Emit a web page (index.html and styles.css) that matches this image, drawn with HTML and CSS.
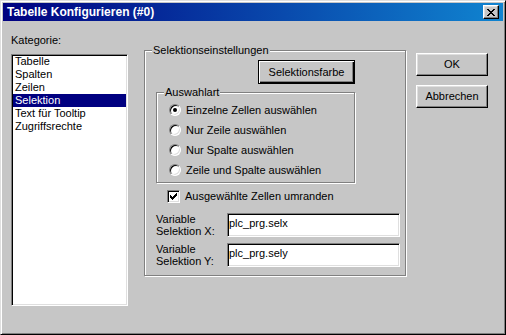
FILE: index.html
```html
<!DOCTYPE html>
<html lang="de">
    <head>
        <meta charset="UTF-8" />
        <title>Tabelle Konfigurieren (#0)</title>
        <link rel="stylesheet" href="styles.css">
    </head>
    <body>
        <div class="window">
            <div class="titlebar">
                <span class="title">Tabelle Konfigurieren (#0)</span>
                <button class="close-btn" type="button">
                    <svg width="8" height="7" viewBox="0 0 8 7" shape-rendering="crispEdges">
                        <path d="M0 0h2v1h-2z M6 0h2v1h-2z M1 1h2v1h-2z M5 1h2v1h-2z M2 2h4v1h-4z M3 3h2v1h-2z M2 4h4v1h-4z M1 5h2v1h-2z M5 5h2v1h-2z M0 6h2v1h-2z M6 6h2v1h-2z" fill="#000" />
                    </svg>
                </button>
            </div>
            <div class="content">
                <div class="category">
                    <div class="label">Kategorie:</div>
                    <ul class="listbox">
                        <li>Tabelle</li>
                        <li>Spalten</li>
                        <li>Zeilen</li>
                        <li class="selected">Selektion</li>
                        <li>Text für Tooltip</li>
                        <li>Zugriffsrechte</li>
                    </ul>
                </div>
                <div class="group main-group">
                    <span class="group-title">Selektionseinstellungen</span>
                    <div class="color-row">
                        <button class="btn btn-default" type="button">Selektionsfarbe</button>
                    </div>
                    <div class="group mode-group">
                        <span class="group-title">Auswahlart</span>
                        <div class="radio-row"><span class="radio checked"></span>Einzelne Zellen auswählen</div>
                        <div class="radio-row"><span class="radio"></span>Nur Zeile auswählen</div>
                        <div class="radio-row"><span class="radio"></span>Nur Spalte auswählen</div>
                        <div class="radio-row"><span class="radio"></span>Zeile und Spalte auswählen</div>
                    </div>
                    <div class="check-row">
                        <span class="checkbox">
                            <svg width="7" height="7" viewBox="0 0 7 7" shape-rendering="crispEdges">
                                <path d="M6 0h1v1h-1z M5 1h2v1h-2z M0 2h1v1h-1z M4 2h3v1h-3z M0 3h2v1h-2z M3 3h3v1h-3z M0 4h5v1h-5z M1 5h3v1h-3z M2 6h1v1h-1z" fill="#000" />
                            </svg>
                        </span>
                        Ausgewählte Zellen umranden
                    </div>
                    <div class="var-row">
                        <span class="var-label">Variable<br>Selektion X:</span>
                        <div class="textbox">plc_prg.selx</div>
                    </div>
                    <div class="var-row">
                        <span class="var-label">Variable<br>Selektion Y:</span>
                        <div class="textbox">plc_prg.sely</div>
                    </div>
                </div>
                <div class="actions">
                    <button class="btn" type="button">OK</button>
                    <button class="btn" type="button">Abbrechen</button>
                </div>
            </div>
        </div>
    </body>
</html>
```

FILE: styles.css
```css
* {
    box-sizing: border-box;
}
body {
    margin: 0;
    background-color: #c6c6c6;
    font-family: "Liberation Sans", Arial, sans-serif;
    font-size: 11px;
    line-height: 13px;
    color: #000;
}
.window {
    width: 506px;
    height: 335px;
    padding: 2px;
    background-color: #c6c6c6;
    border: 1px solid;
    border-color: #dfdfdf #000 #000 #dfdfdf;
    box-shadow: inset 1px 1px #fff, inset -1px -1px #808080;
}
.titlebar {
    height: 18px;
    display: flex;
    align-items: center;
    justify-content: space-between;
    padding: 0 4px 0 4px;
    background: linear-gradient(to right, #000080, #1084d0);
    color: #fff;
    font-size: 12px;
    font-weight: bold;
}
.close-btn {
    width: 16px;
    height: 14px;
    padding: 0;
    display: flex;
    align-items: center;
    justify-content: center;
    background-color: #c6c6c6;
    border: 1px solid;
    border-color: #fff #000 #000 #fff;
    box-shadow: inset -1px -1px #808080, inset 1px 1px #dfdfdf;
}
.content {
    display: flex;
    align-items: flex-start;
    padding: 13px 0 0 8px;
}
.category {
    width: 117px;
    margin-right: 16px;
}
.listbox {
    margin: 7px 0 0;
    padding: 0 1px;
    list-style: none;
    height: 252px;
    background-color: #fff;
    border: 1px solid;
    border-color: #808080 #fff #fff #808080;
    box-shadow: inset 1px 1px #000, inset -1px -1px #dfdfdf;
}
.listbox li {
    height: 13px;
    padding-left: 2px;
    white-space: nowrap;
}
.listbox li.selected {
    background-color: #000080;
    color: #fff;
}
.group {
    position: relative;
    border: 1px solid #808080;
    box-shadow: inset 1px 1px #fff, 1px 1px #fff;
}
.group-title {
    position: absolute;
    top: -7px;
    left: 7px;
    padding: 0 1px;
    background-color: #c6c6c6;
    white-space: nowrap;
}
.main-group {
    width: 262px;
    height: 226px;
    margin-top: 16px;
    padding: 9px 0 0 11px;
}
.color-row {
    width: 199px;
    display: flex;
    justify-content: flex-end;
}
.mode-group {
    width: 199px;
    height: 91px;
    margin-top: 8px;
    padding-top: 7px;
}
.radio-row {
    height: 20px;
    display: flex;
    align-items: center;
    padding-left: 12px;
}
.radio {
    position: relative;
    flex-shrink: 0;
    width: 12px;
    height: 12px;
    margin-right: 5px;
    border-radius: 50%;
    background-color: #fff;
    border: 1px solid;
    border-color: #808080 #fff #fff #808080;
    box-shadow: inset 1px 1px #000, inset -1px -1px #dfdfdf;
}
.radio.checked::after {
    content: "";
    position: absolute;
    left: 3px;
    top: 3px;
    width: 4px;
    height: 4px;
    border-radius: 50%;
    background-color: #000;
}
.check-row {
    height: 13px;
    display: flex;
    align-items: center;
    margin-top: 7px;
    padding-left: 11px;
}
.checkbox {
    width: 13px;
    height: 13px;
    margin-right: 5px;
    display: flex;
    align-items: center;
    justify-content: center;
    background-color: #fff;
    border: 1px solid;
    border-color: #808080 #fff #fff #808080;
    box-shadow: inset 1px 1px #000, inset -1px -1px #dfdfdf;
}
.var-row {
    display: flex;
    align-items: flex-start;
    margin-top: 6px;
}
.check-row + .var-row {
    margin-top: 10px;
}
.var-label {
    width: 71px;
    line-height: 12px;
    padding-top: 0;
}
.textbox {
    width: 173px;
    height: 24px;
    padding: 0 0 2px 1px;
    line-height: 18px;
    background-color: #fff;
    border: 1px solid;
    border-color: #808080 #fff #fff #808080;
    box-shadow: inset 1px 1px #000, inset -1px -1px #dfdfdf;
    white-space: nowrap;
}
.actions {
    width: 72px;
    margin: 19px 0 0 10px;
    display: flex;
    flex-direction: column;
    gap: 9px;
}
.btn {
    height: 23px;
    padding: 0;
    font: inherit;
    color: #000;
    background-color: #c6c6c6;
    border: 1px solid;
    border-color: #fff #000 #000 #fff;
    box-shadow: inset -1px -1px #808080, inset 1px 1px #dfdfdf;
}
.btn-default {
    width: 97px;
    height: 24px;
    border-color: #000;
    box-shadow: inset 1px 1px #fff, inset -1px -1px #000, inset -2px -2px #808080;
}
```
